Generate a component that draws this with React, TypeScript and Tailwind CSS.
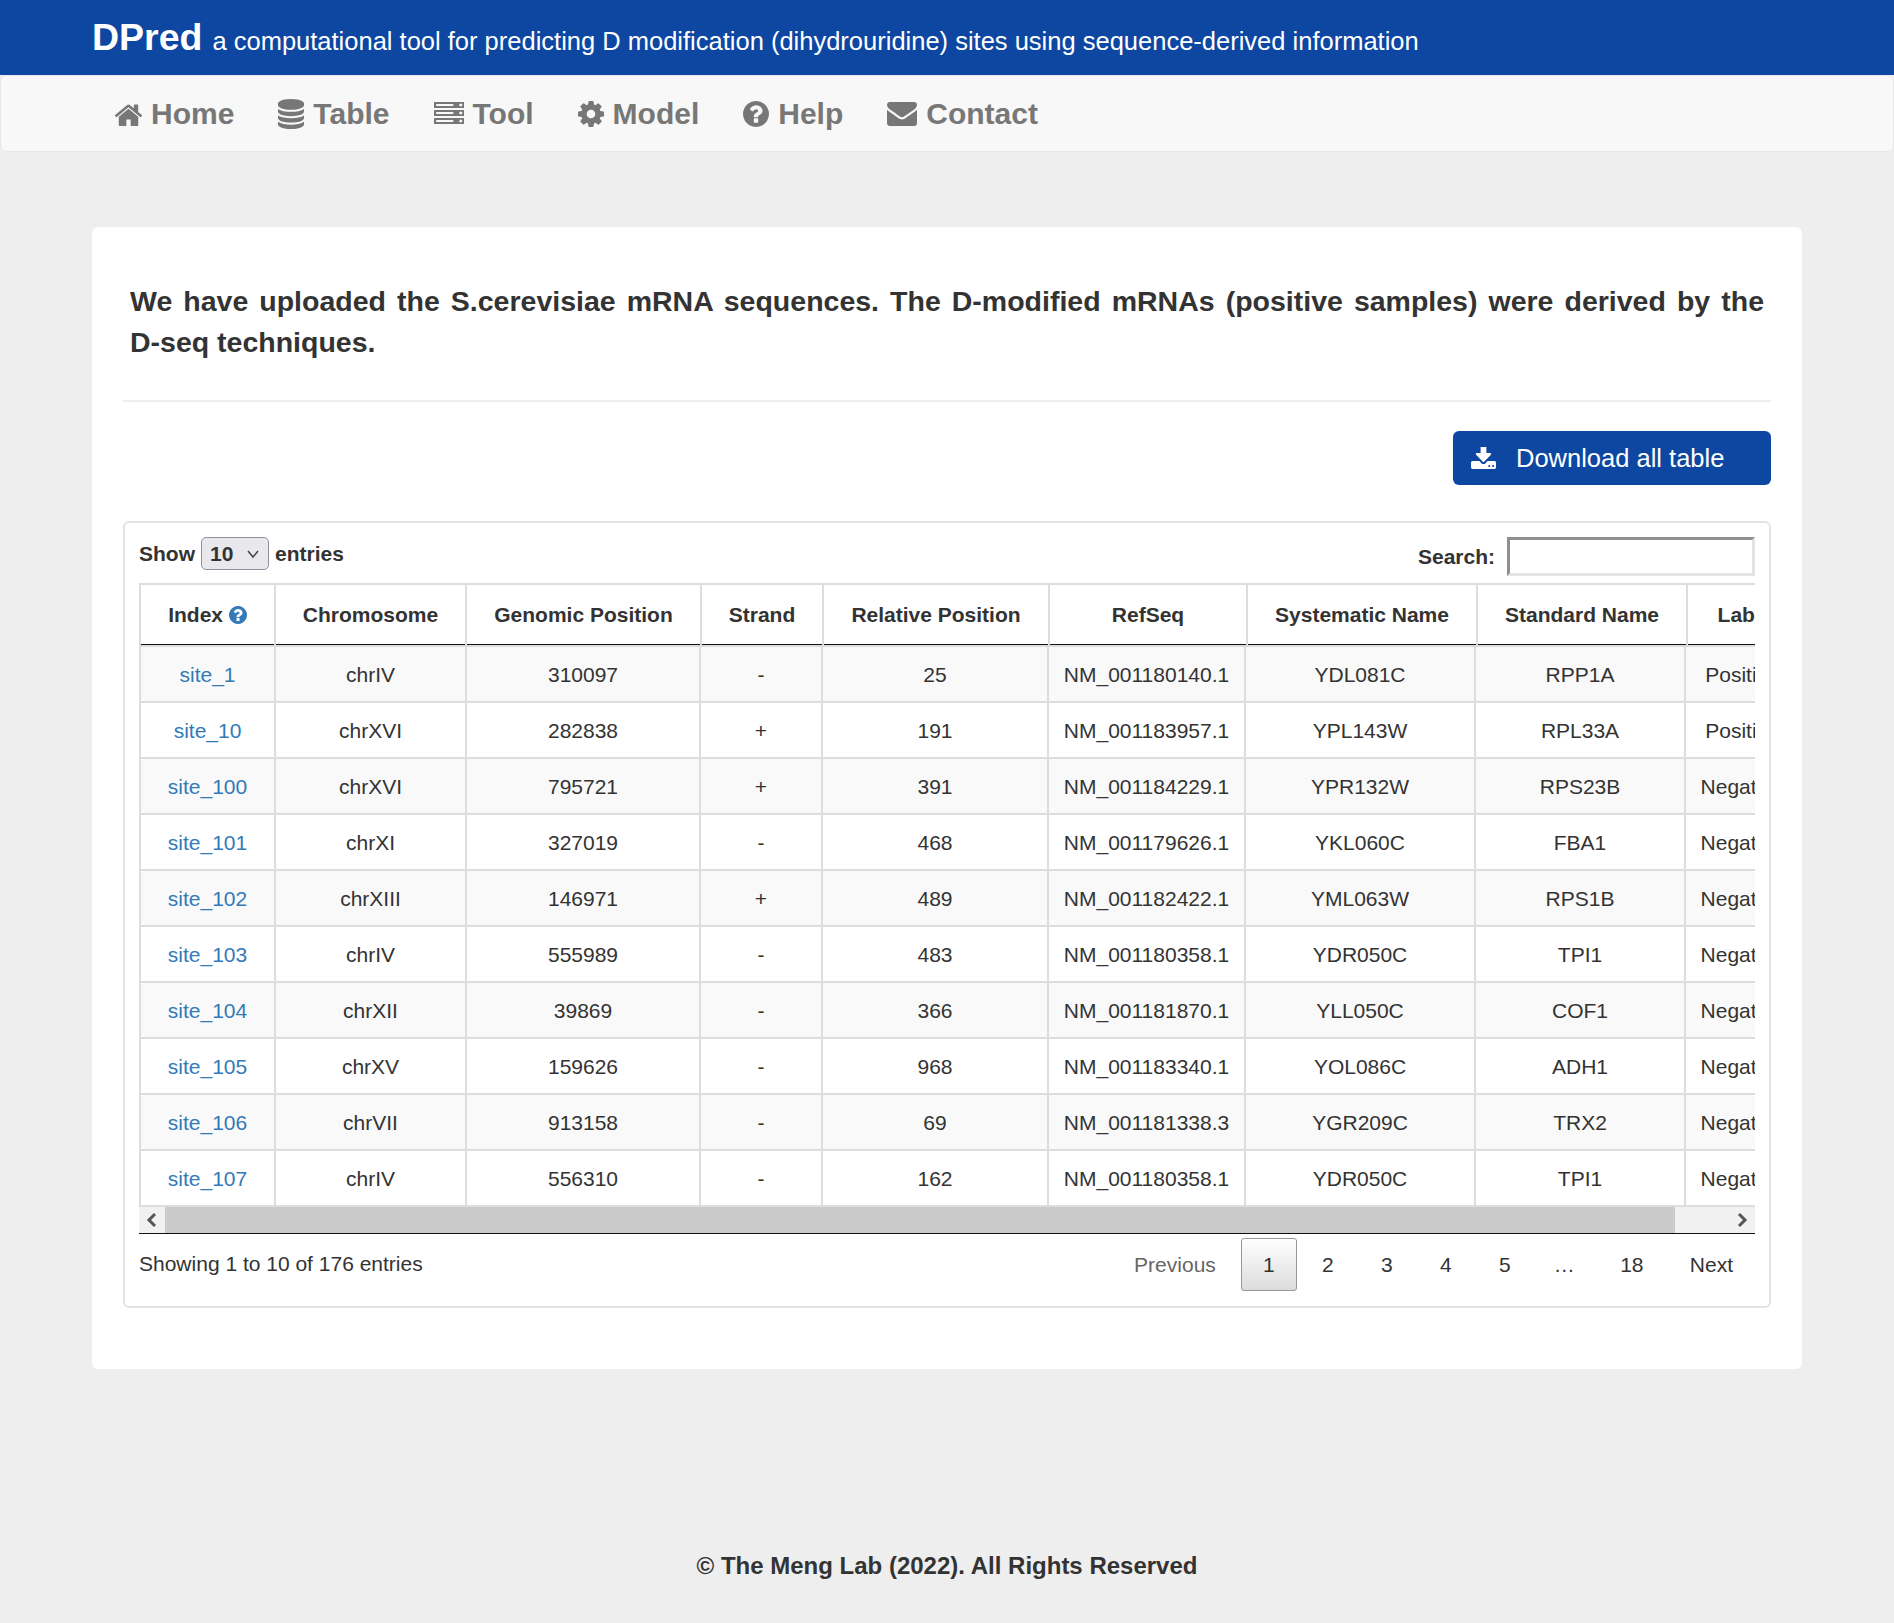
const rows = [
  ["site_1", "chrIV", "310097", "-", "25", "NM_001180140.1", "YDL081C", "RPP1A", "Positive"],
  ["site_10", "chrXVI", "282838", "+", "191", "NM_001183957.1", "YPL143W", "RPL33A", "Positive"],
  ["site_100", "chrXVI", "795721", "+", "391", "NM_001184229.1", "YPR132W", "RPS23B", "Negative"],
  ["site_101", "chrXI", "327019", "-", "468", "NM_001179626.1", "YKL060C", "FBA1", "Negative"],
  ["site_102", "chrXIII", "146971", "+", "489", "NM_001182422.1", "YML063W", "RPS1B", "Negative"],
  ["site_103", "chrIV", "555989", "-", "483", "NM_001180358.1", "YDR050C", "TPI1", "Negative"],
  ["site_104", "chrXII", "39869", "-", "366", "NM_001181870.1", "YLL050C", "COF1", "Negative"],
  ["site_105", "chrXV", "159626", "-", "968", "NM_001183340.1", "YOL086C", "ADH1", "Negative"],
  ["site_106", "chrVII", "913158", "-", "69", "NM_001181338.3", "YGR209C", "TRX2", "Negative"],
  ["site_107", "chrIV", "556310", "-", "162", "NM_001180358.1", "YDR050C", "TPI1", "Negative"],
];
const heads = ["Chromosome", "Genomic Position", "Strand", "Relative Position", "RefSeq", "Systematic Name", "Standard Name", "Label"];
const headW = [135, 191, 235, 122, 226, 198, 230, 210, 116];
const bodyW = [135, 191, 234, 122, 226, 197, 230, 210, 114];

const P = {
  home: "M1472 992v480q0 26-19 45t-45 19h-384v-384h-256v384h-384q-26 0-45-19t-19-45v-480q0-1 .5-3t.5-3l575-474 575 474q1 2 1 6zm223-69l-62 74q-8 9-21 11h-3q-13 0-21-7l-692-577-692 577q-12 8-24 7-13-2-21-11l-62-74q-8-10-7-23.5t11-21.5l719-599q32-26 76-26t76 26l244 204v-195q0-14 9-23t23-9h192q14 0 23 9t9 23v408l219 182q10 8 11 21.5t-7 23.5z",
  database: "M896 768q237 0 443-43t325-127v170q0 69-103 128t-280 93.5-385 34.5-385-34.5-280-93.5-103-128v-170q119 84 325 127t443 43zm0 768q237 0 443-43t325-127v170q0 69-103 128t-280 93.5-385 34.5-385-34.5-280-93.5-103-128v-170q119 84 325 127t443 43zm0-384q237 0 443-43t325-127v170q0 69-103 128t-280 93.5-385 34.5-385-34.5-280-93.5-103-128v-170q119 84 325 127t443 43zm0-1152q208 0 385 34.5t280 93.5 103 128v128q0 69-103 128t-280 93.5-385 34.5-385-34.5-280-93.5-103-128v-128q0-69 103-128t280-93.5 385-34.5z",
  server: "M128 1408h1024v-128h-1024v128zm0-512h1024v-128h-1024v128zm1568 448q0-40-28-68t-68-28-68 28-28 68 28 68 68 28 68-28 28-68zm-1568-960h1024v-128h-1024v128zm1568 448q0-40-28-68t-68-28-68 28-28 68 28 68 68 28 68-28 28-68zm0-512q0-40-28-68t-68-28-68 28-28 68 28 68 68 28 68-28 28-68zm96 832v384h-1792v-384h1792zm0-512v384h-1792v-384h1792zm0-512v384h-1792v-384h1792z",
  cog: "M1152 896q0-106-75-181t-181-75-181 75-75 181 75 181 181 75 181-75 75-181zm512-109v222q0 12-8 23t-20 13l-185 28q-19 54-39 91 35 50 107 138 10 12 10 25t-9 23q-27 37-99 108t-94 71q-12 0-26-9l-138-108q-44 23-91 38-16 136-29 186-7 28-36 28h-222q-14 0-24.5-8.5t-11.5-21.5l-28-184q-49-16-90-37l-141 107q-10 9-25 9-14 0-25-11-126-114-165-168-7-10-7-23 0-12 8-23 15-21 51-66.5t54-70.5q-27-50-41-99l-183-27q-13-2-21-12.5t-8-23.5v-222q0-12 8-23t19-13l186-28q14-46 39-92-40-57-107-138-10-12-10-24 0-10 9-23 26-36 98.5-107.5t94.5-71.5q13 0 26 10l138 107q44-23 91-38 16-136 29-186 7-28 36-28h222q14 0 24.5 8.5t11.5 21.5l28 184q49 16 90 37l142-107q9-9 24-9 13 0 25 10 129 119 165 170 7 8 7 22 0 12-8 23-15 21-51 66.5t-54 70.5q26 50 41 98l183 28q13 2 21 12.5t8 23.5z",
  question: "M1024 1376v-192q0-14-9-23t-23-9h-192q-14 0-23 9t-9 23v192q0 14 9 23t23 9h192q14 0 23-9t9-23zm256-672q0-88-55.5-163t-138.5-116-170-41q-243 0-371 213-15 24 8 42l132 100q7 6 19 6 16 0 25-12 53-68 86-92 34-24 86-24 48 0 85.5 26t37.5 59q0 38-20 61t-68 45q-63 28-115.5 86.5t-52.5 125.5v36q0 14 9 23t23 9h192q14 0 23-9t9-23q0-19 21.5-49.5t54.5-49.5q32-18 49-28.5t46-35 44.5-48 28-60.5 12.5-81zm384 192q0 209-103 385.5t-279.5 279.5-385.5 103-385.5-103-279.5-279.5-103-385.5 103-385.5 279.5-279.5 385.5-103 385.5 103 279.5 279.5 103 385.5z",
  envelope: "M1792 710v794q0 66-47 113t-113 47h-1472q-66 0-113-47t-47-113v-794q44 49 101 87 362 246 497 345 57 42 92.5 65.5t94.5 48 110 24.5h2q51 0 110-24.5t94.5-48 92.5-65.5q170-123 498-345 57-39 100-87zm0-294q0 79-49 151t-122 123q-376 261-468 325-10 7-42.5 30.5t-54 38-52 32.5-57.5 27-50 9h-2q-23 0-50-9t-57.5-27-52-32.5-54-38-42.5-30.5q-91-64-262-182.5t-205-142.5q-62-42-117-115.5t-55-136.5q0-78 41.5-130t118.5-52h1472q65 0 112.5 47t47.5 113z",
  download: "M1344 1344q0-26-19-45t-45-19-45 19-19 45 19 45 45 19 45-19 19-45zm256 0q0-26-19-45t-45-19-45 19-19 45 19 45 45 19 45-19 19-45zm128-224v320q0 40-28 68t-68 28h-1472q-40 0-68-28t-28-68v-320q0-40 28-68t68-28h465l135 136q58 56 136 56t136-56l136-136h464q40 0 68 28t28 68zm-325-569q17 41-14 70l-448 448q-18 19-45 19t-45-19l-448-448q-31-29-14-70 17-39 59-39h256v-448q0-26 19-45t45-19h256q26 0 45 19t19 45v448h256q42 0 59 39z",
};

function Fa({ d, box, className }: { d: string; box: string; className: string }) {
  return (
    <svg viewBox={box} className={className} fill="currentColor" preserveAspectRatio="none" aria-hidden="true">
      <path d={d} />
    </svg>
  );
}

const nav = [
  { d: P.home, box: "96 224 1600 1312", cls: "w-[27px] h-[22px] mt-[3px]", label: "Home" },
  { d: P.database, box: "128 0 1536 1792", cls: "w-[26px] h-[30px]", label: "Table" },
  { d: P.server, box: "0 128 1792 1536", cls: "w-[30px] h-[24px]", label: "Tool" },
  { d: P.cog, box: "128 128 1536 1536", cls: "w-[26px] h-[26px]", label: "Model" },
  { d: P.question, box: "128 128 1536 1536", cls: "w-[26px] h-[26px]", label: "Help" },
  { d: P.envelope, box: "0 256 1792 1408", cls: "w-[30px] h-[24px]", label: "Contact" },
];
const pages = ["2", "3", "4", "5"];

export default function App() {
  return (
    <div className="min-h-[1623px] bg-[#eeeeee] text-[#333333] font-['Liberation_Sans',Arial,sans-serif] text-[21px]">
      <header className="h-[75px] bg-[#0d47a1] pl-[92px] flex items-baseline pt-[13px] text-white">
        <span className="text-[37.5px] font-bold leading-[48px]">DPred</span>
        <span className="text-[25.5px] leading-[48px] ml-[10px]">a computational tool for predicting D modification (dihydrouridine) sites using sequence-derived information</span>
      </header>
      <nav className="h-[77px] bg-[#f8f8f8] border border-[#e7e7e7] rounded-[6px] flex items-center pl-[114px] gap-[44px] text-[30px] font-bold text-[#777777]">
        {nav.map((n) => (
          <div key={n.label} className="flex items-center gap-[9px]">
            <Fa d={n.d} box={n.box} className={n.cls} />
            <span>{n.label}</span>
          </div>
        ))}
      </nav>
      <main className="mx-[92px] mt-[75px] h-[1142px] bg-white rounded-[6px] px-[31px] pt-[54px]">
        <p className="mx-[7px] text-[28.5px] leading-[41px] font-bold text-justify">
          We have uploaded the S.cerevisiae mRNA sequences. The D-modified mRNAs (positive samples) were derived by the <span className="whitespace-nowrap">D-seq</span> techniques.
        </p>
        <hr className="mt-[37px] border-0 h-[2px] bg-[#eeeeee]" />
        <div className="flex justify-end mt-[29px]">
          <button className="w-[318px] h-[54px] bg-[#0d47a1] text-white rounded-[6px] text-[25.5px] flex items-center pl-[18px] gap-[20px]">
            <Fa d={P.download} box="64 128 1664 1408" className="w-[25px] h-[22px]" />
            <span>Download all table</span>
          </button>
        </div>
        <section className="mt-[36px] h-[787px] border-2 border-[#e3e3e3] rounded-[6px] px-[14px]">
          <div className="flex justify-between h-[60px]">
            <div className="flex items-start pt-[14px] font-bold">
              <span className="leading-[33px]">Show</span>
              <div className="relative ml-[6px] mr-[6px] w-[68px] h-[33px] bg-[#e9e9ed] border border-[#8f8f9d] rounded-[5px] pl-[8px] leading-[31px]">
                10
                <svg className="absolute right-[8px] top-[10px] w-[14px] h-[12px]" viewBox="0 0 14 12" fill="none" stroke="#444" strokeWidth="1.5"><path d="M2 3l5 6 5-6" /></svg>
              </div>
              <span className="leading-[33px]">entries</span>
            </div>
            <div className="flex items-start pt-[14px] font-bold">
              <span className="leading-[40px] mr-[12px]">Search:</span>
              <div className="w-[248px] h-[39px] bg-white border-[3px] border-t-[#8f8f8f] border-l-[#8f8f8f] border-r-[#e3e3e3] border-b-[#e3e3e3]" />
            </div>
          </div>
          <div className="overflow-hidden">
            <table className="table-fixed border-collapse w-[1663px]">
              <colgroup>{headW.map((w, i) => <col key={i} style={{ width: w }} />)}</colgroup>
              <thead>
                <tr className="h-[60px] font-bold">
                  <th className="border-l-2 border-t-2 border-r-2 border-b border-[#dddddd] border-b-[#111111] font-bold">
                    Index <Fa d={P.question} box="128 128 1536 1536" className="inline w-[18px] h-[18px] text-[#337ab7] align-[-2px]" />
                  </th>
                  {heads.map((h) => (
                    <th key={h} className="border-t-2 border-r-2 border-b border-[#dddddd] border-b-[#111111] font-bold whitespace-nowrap">{h}</th>
                  ))}
                </tr>
              </thead>
            </table>
            <table className="table-fixed border-collapse w-[1661px]">
              <colgroup>{bodyW.map((w, i) => <col key={i} style={{ width: w }} />)}</colgroup>
              <tbody>
                {rows.map((r, i) => (
                  <tr key={r[0]} className={`h-[56px] ${i % 2 === 0 ? "bg-[#f9f9f9]" : "bg-white"}`}>
                    {r.map((c, j) => (
                      <td key={j} className={`text-center whitespace-nowrap pt-[2px] border-r-2 border-b-2 border-[#dddddd] ${i === 0 ? "border-t-2" : ""} ${j === 0 ? "border-l-2 text-[#337ab7]" : ""}`}>{c}</td>
                    ))}
                  </tr>
                ))}
              </tbody>
            </table>
          </div>
          <div className="h-[27px] bg-[#f1f1f1] border-b border-[#111111] flex justify-between items-center">
            <svg className="w-[26px] h-[26px]" viewBox="0 0 26 26" fill="none" stroke="#555" strokeWidth="3"><path d="M16 7l-6 6 6 6" /></svg>
            <div className="w-[1510px] h-full bg-[#cacaca] mr-auto" />
            <svg className="w-[26px] h-[26px]" viewBox="0 0 26 26" fill="none" stroke="#555" strokeWidth="3"><path d="M10 7l6 6-6 6" /></svg>
          </div>
          <div className="flex justify-between items-start">
            <span className="mt-[14px] leading-[32px]">Showing 1 to 10 of 176 entries</span>
            <div className="flex items-center mt-[4px] mr-[1px]">
              <span className="px-[21px] pt-[2px] text-[#666666] mr-[4px]">Previous</span>
              <span className="w-[56px] h-[53px] pt-[2px] border border-[#979797] rounded-[3px] bg-gradient-to-b from-white to-[#dcdcdc] flex items-center justify-center">1</span>
              {pages.map((p) => <span key={p} className="ml-[3px] pt-[2px] w-[56px] text-center">{p}</span>)}
              <span className="w-[63px] pt-[2px] text-center text-[#333333]">…</span>
              <span className="w-[72px] pt-[2px] text-center">18</span>
              <span className="ml-[1px] pt-[2px] px-[21px]">Next</span>
            </div>
          </div>
        </section>
      </main>
      <footer className="text-center text-[24px] font-bold mt-[181px] leading-[32px]">© The Meng Lab (2022). All Rights Reserved</footer>
    </div>
  );
}
